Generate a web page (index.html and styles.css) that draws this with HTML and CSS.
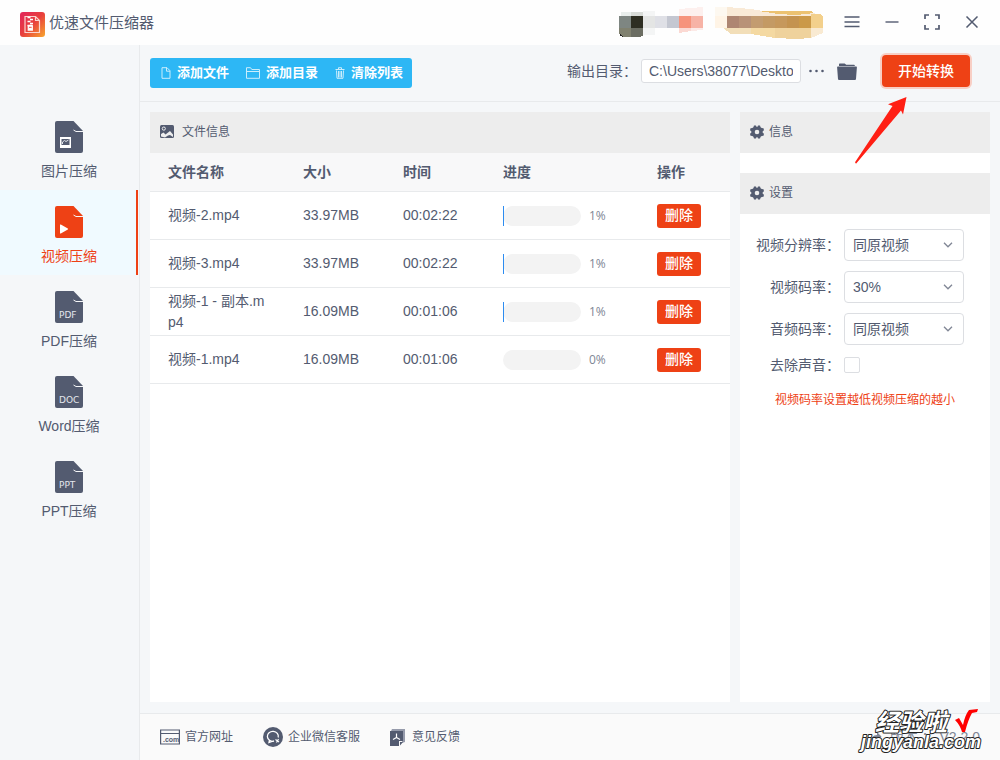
FILE: index.html
```html
<!DOCTYPE html>
<html lang="zh-CN">
<head>
<meta charset="utf-8">
<meta name="viewport" content="width=device-width, initial-scale=1">
<title>优速文件压缩器</title>
<link rel="stylesheet" href="styles.css">
</head>
<body>
<svg class="defs" width="0" height="0" aria-hidden="true">
  <symbol id="file" viewBox="0 0 28 32"><path fill="currentColor" d="M2 0H18.500L28 10V30a2 2 0 0 1-2 2H2a2 2 0 0 1-2-2V2a2 2 0 0 1 2-2z"/><path d="M18.500 9L21 10.500H28" fill="none" stroke="#f6f7f9" stroke-width="1"/></symbol>
  <symbol id="gear" viewBox="0 0 14 14"><path fill="currentColor" fill-rule="evenodd" d="M4 .5h2l.4 1.300h1.200L8 .5h2l.6 1.800 1.100.7 1.800.2.500 2-1.300 1v1.600l1.300 1-.5 2-1.800.2-1.100.7-.6 1.800H8l-.4-1.300H6.400L6 13.500H4l-.6-1.800-1.100-.7-1.800-.2-.5-2 1.300-1V6.200L0 5.200l.5-2L2.300 3l1.100-.7zM7 4.700a2.300 2.300 0 1 0 0 4.600 2.300 2.300 0 0 0 0-4.600z"/></symbol>
  <symbol id="chevron" viewBox="0 0 10 6"><path d="M1 .8l4 4 4-4" fill="none" stroke="currentColor" stroke-width="1.300"/></symbol>
</svg>
<div class="app">
  <header class="titlebar">
    <svg class="logo" width="25" height="25" viewBox="0 0 25 25" aria-hidden="true">
      <defs><linearGradient id="lg" x1="0" y1="0" x2="1" y2="1"><stop offset="0.1" stop-color="#e32a56"/><stop offset="0.5" stop-color="#e8403c"/><stop offset="1" stop-color="#f8a72e"/></linearGradient></defs>
      <rect width="25" height="25" rx="3" fill="url(#lg)"/>
      <path d="M5 4.500h10.500l4 4v12H5zM15.500 4.500v4h4" fill="none" stroke="#fbd5d0" stroke-width="1.200"/>
      <path d="M7.500 5.500h3M10 7.500h3M7.500 9.500h3M10 11.500h3M7.500 13.500h5" stroke="#fff" stroke-width="1.400"/>
      <path d="M8.300 14h4v4h-4zM9 16.500h2.600" fill="none" stroke="#fff" stroke-width="1.300"/>
    </svg>
    <h1 class="title">优速文件压缩器</h1>
    <svg class="mosaic" width="206" height="36" viewBox="0 0 206 36" shape-rendering="crispEdges" aria-hidden="true">
      <path fill="#e9eeec" d="M2 8h10v5H2z"/><path fill="#d8dbd7" d="M12 8h12v5H12z"/><path fill="#f4f5f5" d="M24 7h12v5H24zM24 24h12v7H24z"/>
      <path fill="#7e8682" d="M0 12h12v12H0z"/><path fill="#2e2e22" d="M12 12h12v12H12z"/><path fill="#80816f" d="M0 24h12v9H4L0 30z"/><path fill="#6b6d62" d="M12 24h12v8l-4 1h-8z"/><path fill="#222" d="M1 30l4 3-4-1z"/>
      <path fill="#e4e5e4" d="M24 12h12v12H24z"/><path fill="#dfe0e6" d="M36 12h12v12H36z"/><path fill="#c4c7d1" d="M48 12h12v12H48z"/>
      <path fill="#fdf0ee" d="M60 5l24-2v9H60z"/><path fill="#f6937c" d="M60 12h12v12H60z"/><path fill="#f7b3a6" d="M72 12h12v12H72z"/><path fill="#fbd9d3" d="M60 24h12v3l-12 2z"/><path fill="#fceae7" d="M72 24h12v2l-12 1z"/>
      <path fill="#fdf8f0" d="M96 3l12 0v9H96z"/><path fill="#f9ead7" d="M108 3l24 2 24 4h38l10 3h-96z"/><path fill="#ecc271" d="M140 7h52l3 2-18 2-18-1z"/>
      <path fill="#fff4e6" d="M96 12h12v12H96z"/><path fill="#ae8672" d="M108 12h12v12h-12z"/><path fill="#b89278" d="M120 12h12v12h-12z"/><path fill="#c39c70" d="M132 12h12v12h-12z"/><path fill="#c49a64" d="M144 12h12v12h-12z"/><path fill="#c6985c" d="M156 12h12v12h-12z"/><path fill="#c49350" d="M168 12h12v12h-12z"/><path fill="#cb9948" d="M180 12h12v12h-12z"/><path fill="#f3d08c" d="M192 10l9 0 3 3v11h-12z"/>
      <path fill="#f2deb8" d="M104 24h28v6h-20z"/><path fill="#f4d9a2" d="M132 24h24v10l-24-4z"/><path fill="#efd29c" d="M156 24h36v10l-14 1-22-1z"/><path fill="#f9ead2" d="M192 24h12v5l-12 5z"/>
    </svg>
    <div class="window-tools">
      <button aria-label="菜单"><svg width="16" height="12" viewBox="0 0 16 12"><path d="M.5 1h15M.5 6h15M.5 10.500h15" stroke="currentColor" stroke-width="1.400"/></svg></button>
      <button aria-label="最小化"><svg width="16" height="12" viewBox="0 0 16 12"><path d="M1.500 6h13" stroke="currentColor" stroke-width="1.400"/></svg></button>
      <button aria-label="最大化"><svg width="16" height="16" viewBox="0 0 16 16"><path d="M1 5V1h4M11 1h4v4M15 11v4h-4M5 15H1v-4" fill="none" stroke="currentColor" stroke-width="1.700"/></svg></button>
      <button aria-label="关闭"><svg width="16" height="12" viewBox="0 0 16 12"><path d="M2.500.5l11 11M13.500.5l-11 11" stroke="currentColor" stroke-width="1.500"/></svg></button>
    </div>
  </header>

  <nav class="sidebar">
    <a href="#image" class="nav-item"><svg width="28" height="32" viewBox="0 0 28 32"><use href="#file"/><path fill="#fff" d="M5 16h11v11H5z"/><path fill="#535b70" d="M6.500 18h8v6h-8z"/><path d="M7.500 23v-2l2-1.500 1.500 1 2.500-1.500" fill="none" stroke="#dfe2e8"/></svg>图片压缩</a>
    <a href="#video" class="nav-item active" aria-current="page"><svg width="28" height="32" viewBox="0 0 28 32"><use href="#file"/><path fill="#fff" d="M5 19v8q0 .8.8.4l7-3.900q.6-.5 0-1l-7-3.900q-.8-.4-.8.4z"/></svg>视频压缩</a>
    <a href="#pdf" class="nav-item"><svg width="28" height="32" viewBox="0 0 28 32"><use href="#file"/><text x="4" y="27">PDF</text></svg>PDF压缩</a>
    <a href="#word" class="nav-item"><svg width="28" height="32" viewBox="0 0 28 32"><use href="#file"/><text x="4" y="27">DOC</text></svg>Word压缩</a>
    <a href="#ppt" class="nav-item"><svg width="28" height="32" viewBox="0 0 28 32"><use href="#file"/><text x="4" y="27">PPT</text></svg>PPT压缩</a>
  </nav>

  <div class="toolbar">
    <div class="actions">
      <button><svg width="10" height="12" viewBox="0 0 10 12"><path d="M1 .7h5l3 3v7.600H1zM5.500.7v3.500H9" fill="none" stroke="currentColor"/></svg>添加文件</button>
      <button><svg width="14" height="12" viewBox="0 0 14 12"><path d="M.5 11.300V.7h4l1.300 1.800h7.700v8.800zM.5 4.500h13" fill="none" stroke="currentColor"/></svg>添加目录</button>
      <button><svg width="10" height="12" viewBox="0 0 10 12"><path d="M.5 2.500h9M3.500 2V.7h3V2M1.500 3.500l.5 7.800h6l.5-7.800M3.500 4v6.500M5 4v6.500M6.500 4v6.500" fill="none" stroke="currentColor" stroke-width="1"/></svg>清除列表</button>
    </div>
    <div class="output">
      <label for="out">输出目录：</label>
      <input id="out" type="text" value="C:\Users\38077\Desktop">
      <button class="plain" aria-label="更多"><svg width="15" height="4" viewBox="0 0 15 4"><path fill="currentColor" d="M1.500.7a1.300 1.300 0 1 1 0 2.600 1.300 1.300 0 0 1 0-2.600zM7.500.7a1.300 1.300 0 1 1 0 2.600 1.300 1.300 0 0 1 0-2.600zM13.500.7a1.300 1.300 0 1 1 0 2.600 1.300 1.300 0 0 1 0-2.600z"/></svg></button>
      <button class="plain folder" aria-label="打开目录"><svg width="20" height="17" viewBox="0 0 20 17"><path fill="currentColor" d="M2 3V1.200q0-.7.7-.7h5l1.500 1.300H17q.8 0 .8.700V3z"/><path fill="currentColor" d="M.8 3.400h18.400q.8 0 .7.800l-.9 11.800q-.1.900-1 .9H2q-.9 0-1-.9L.1 4.200q0-.8.7-.8z"/></svg></button>
    </div>
    <div class="start-wrap">
      <button class="start">开始转换</button>
      <svg class="arrow" width="54" height="70" viewBox="0 0 54 70" aria-hidden="true"><path fill="#ff1f14" d="M52.500 1L34 8.300l4.500 1.700L1 66.300l1 1.500L47 14.500l2 4z"/></svg>
    </div>
  </div>

  <main class="content">
    <section class="panel files">
      <h2 class="panel-title"><svg width="14" height="13" viewBox="0 0 14 13"><path fill="currentColor" d="M1.500 0h11q1.500 0 1.500 1.500v10q0 1.500-1.500 1.500h-11Q0 13 0 11.500v-10Q0 0 1.500 0z"/><circle cx="3.800" cy="3.600" r="1.600" fill="none" stroke="#eee"/><path fill="#eee" d="M1 11.500V9l2.500-1.500L5.500 9.500 10 6l3 3.500v2.500l-3-2-2 .5-3 2z"/></svg>文件信息</h2>
      <table>
        <colgroup><col class="c-name"><col class="c-size"><col class="c-time"><col class="c-progress"><col class="c-op"></colgroup>
        <thead><tr><th>文件名称</th><th>大小</th><th>时间</th><th>进度</th><th>操作</th></tr></thead>
        <tbody>
          <tr><td>视频-2.mp4</td><td>33.97MB</td><td>00:02:22</td><td><div class="progress"><div class="track"><div class="bar" style="width:1%"></div></div>1%</div></td><td><button class="del">删除</button></td></tr>
          <tr><td>视频-3.mp4</td><td>33.97MB</td><td>00:02:22</td><td><div class="progress"><div class="track"><div class="bar" style="width:1%"></div></div>1%</div></td><td><button class="del">删除</button></td></tr>
          <tr><td>视频-1 - 副本.mp4</td><td>16.09MB</td><td>00:01:06</td><td><div class="progress"><div class="track"><div class="bar" style="width:1%"></div></div>1%</div></td><td><button class="del">删除</button></td></tr>
          <tr><td>视频-1.mp4</td><td>16.09MB</td><td>00:01:06</td><td><div class="progress"><div class="track"><div class="bar" style="width:0%"></div></div>0%</div></td><td><button class="del">删除</button></td></tr>
        </tbody>
      </table>
    </section>
    <aside class="panel side">
      <h2 class="panel-title"><svg width="14" height="14"><use href="#gear"/></svg>信息</h2>
      <h2 class="panel-title settings-title"><svg width="14" height="14"><use href="#gear"/></svg>设置</h2>
      <form class="settings">
        <label for="res">视频分辨率：</label>
        <div class="select"><select id="res"><option>同原视频</option></select><svg width="10" height="6"><use href="#chevron"/></svg></div>
        <label for="vbr">视频码率：</label>
        <div class="select"><select id="vbr"><option>30%</option></select><svg width="10" height="6"><use href="#chevron"/></svg></div>
        <label for="abr">音频码率：</label>
        <div class="select"><select id="abr"><option>同原视频</option></select><svg width="10" height="6"><use href="#chevron"/></svg></div>
        <label for="mute">去除声音：</label>
        <input id="mute" type="checkbox">
      </form>
      <p class="hint">视频码率设置越低视频压缩的越小</p>
    </aside>
  </main>

  <footer class="footer">
    <a href="#site"><svg width="20" height="16" viewBox="0 0 20 16"><path d="M.6 1h18.800v14H.6zM.6 4.500h18.800" fill="none" stroke="currentColor" stroke-width="1.200"/><text class="com" x="3" y="13">.com</text></svg>官方网址</a>
    <a href="#wechat"><svg width="20" height="20" viewBox="0 0 20 20"><circle cx="10" cy="10" r="10" fill="currentColor"/><path d="M15.200 10.500A5.500 5 0 1 0 11 14.200L9 14.300 6 15.500 6.500 13" fill="none" stroke="#fff" stroke-width="1.300"/><path d="M12.500 12.500l3.500 2.500M15.500 12l-2 3.500" stroke="#fff" stroke-width="1.200"/></svg>企业微信客服</a>
    <a href="#feedback"><svg width="15" height="17" viewBox="0 0 15 17"><path fill="#969bab" d="M2 0h13v13l-3 1V2H1z"/><path fill="currentColor" d="M0 2h13v10H9v5H0z"/><path fill="currentColor" d="M10 13h3l-3 3.500z"/><path d="M6.500 4.500v4M6.500 8.500l-3.500 2M6.500 8.500l3.500 2" fill="none" stroke="#fff" stroke-width="1.200"/></svg>意见反馈</a>
    <div class="version"><svg width="12" height="12" viewBox="0 0 12 12"><path d="M1 11q0-7 6-7V1l4.500 4.500L7 10V7Q3 7 1 11z" fill="currentColor"/></svg>版本 ： V2.2.0
      <svg class="watermark" width="130" height="52" viewBox="0 0 130 52">
        <text class="wm-cn" x="18" y="24">经验啦</text>
        <path d="M98 13l4-2 4 7q2-10 6-15l9-1-1 3-5 1q-4 7-7 19h-3q-2-7-7-12z" fill="#f00"/>
        <text class="wm-en" x="4" y="41">jingyanla.com</text>
      </svg>
    </div>
  </footer>
</div>
</body>
</html>
```

FILE: styles.css
```css
* { box-sizing: border-box; }

body {
  margin: 0;
  color: #535b70;
  font: 14px/20px "Liberation Sans", "Noto Sans CJK SC", sans-serif;
}

button, input, select { font: inherit; color: inherit; }
button { padding: 0; border: 0; background: none; cursor: pointer; }
a { color: inherit; text-decoration: none; }
svg { flex: none; }
.defs { position: absolute; }

.app {
  display: grid;
  grid-template: 45px 57px minmax(0, 1fr) 47px / 140px minmax(0, 1fr);
  min-height: 100vh;
  background: #f5f7f9;
}

.titlebar {
  grid-column: 1 / -1;
  display: flex;
  align-items: center;
  padding: 0 20px;
  background: #fefefe;
}
.logo { margin-top: 4px; }
.title { margin: 0 auto 0 4px; font-size: 15px; font-weight: 400; }
.mosaic { margin: 0 19px 2px 0; }
.window-tools { display: flex; align-items: center; gap: 24px; padding-bottom: 2px; }
.window-tools button { display: flex; }

.sidebar {
  grid-row: 2 / -1;
  padding-top: 60px;
  border-right: 1px solid #e8eaec;
}
.nav-item {
  display: flex;
  flex-direction: column;
  align-items: center;
  gap: 8px;
  height: 85px;
  margin-right: 1px;
  padding-top: 16px;
}
.nav-item.active {
  color: #ee4115;
  background: #f0faff;
  box-shadow: inset -2px 0 #ee4115;
}
.nav-item text { fill: #e4e7ed; font: 9px "DejaVu Sans", sans-serif; }

.toolbar {
  display: flex;
  align-items: center;
  padding: 0 30px 4px 10px;
  border-bottom: 1px solid #e8eaec;
}
.actions {
  display: flex;
  gap: 17px;
  height: 30px;
  margin: 4px auto 0 0;
  padding: 0 9px 0 11px;
  border-radius: 3px;
  color: #fff;
  background: #2db7f5;
  font-size: 13px;
  font-weight: 700;
}
.actions button { display: flex; align-items: center; gap: 6px; }
.actions svg { opacity: 0.75; }
.output { display: flex; align-items: center; }
.output input {
  width: 160px;
  height: 24px;
  margin: 0 8px 0 4px;
  padding: 0 7px;
  border: 1px solid #dcdee2;
  border-radius: 3px;
  background: #fff;
}
.plain { display: flex; }
.folder { margin-left: 13px; }
.start-wrap { position: relative; margin-left: 25px; }
.start {
  width: 88px;
  height: 32px;
  border-radius: 4px;
  color: #fff;
  background: #ee4115;
  box-shadow: 0 0 0 2px #f8cfc5;
  font-weight: 500;
}
.arrow { position: absolute; top: 41px; right: 62px; }

.content {
  display: grid;
  grid-template-columns: minmax(0, 1fr) 250px;
  gap: 10px;
  padding: 10px 10px 11px;
}
.panel { background: #fff; }
.panel-title {
  display: flex;
  align-items: center;
  gap: 8px;
  height: 41px;
  margin: 0;
  padding: 0 10px 2px;
  background: #ededed;
  font-size: 12px;
  font-weight: 400;
}
.side .panel-title { gap: 5px; }
.settings-title { margin-top: 20px; }

table { width: 100%; table-layout: fixed; border-collapse: separate; border-spacing: 0; }
.c-name { width: 135px; }
.c-size, .c-time { width: 100px; }
.c-op { width: 91px; }
th, td {
  height: 48px;
  padding: 0 18px;
  border-bottom: 1px solid #e8eaec;
  text-align: left;
  line-height: 21px;
  word-break: break-all;
}
th { height: 39px; background: #f8f8f9; font-weight: 700; }
.progress { display: flex; align-items: center; gap: 8px; color: #808695; font: 12px/20px "Open Sans", sans-serif; }
.track { width: 78px; height: 20px; border-radius: 10px; background: #f3f3f3; }
.bar { min-width: 0; height: 20px; background: #2d8cf0; }
.del {
  display: block;
  width: 44px;
  height: 24px;
  border-radius: 3px;
  color: #fff;
  background: #ee4115;
  font-weight: 500;
}

.settings {
  display: grid;
  grid-template-columns: 100px 120px;
  align-items: center;
  gap: 10px 4px;
  padding-top: 15px;
}
.settings label { text-align: right; }
.select { display: grid; align-items: center; }
.select > * { grid-area: 1 / 1; }
.select select {
  appearance: none;
  width: 100%;
  height: 32px;
  padding: 0 24px 0 8px;
  border: 1px solid #dcdee2;
  border-radius: 4px;
  background: #fff;
}
.select svg { justify-self: end; margin-right: 11px; color: #808695; pointer-events: none; }
.settings input {
  appearance: none;
  width: 16px;
  height: 16px;
  margin: 0;
  border: 1px solid #dcdee2;
  border-radius: 2px;
  background: #fff;
}
.hint { margin: 15px 0 0; color: #ee4115; font-size: 12px; text-align: center; }

.footer {
  display: flex;
  align-items: center;
  gap: 30px;
  padding: 0 20px;
  border-top: 1px solid #e8eaec;
  background: #fafafa;
  font-size: 12px;
}
.footer a { display: flex; align-items: center; gap: 5px; }
.footer a:nth-child(3) { gap: 7px; }
.com { fill: currentColor; font: 700 7px "Liberation Sans", sans-serif; }
.version {
  position: relative;
  display: flex;
  align-items: center;
  gap: 8px;
  margin-left: auto;
  color: #808695;
  font-size: 14px;
}
.watermark { position: absolute; right: -7px; bottom: -12px; overflow: visible; }
.watermark text { fill: #fff; stroke: #222; stroke-width: 2px; stroke-linejoin: round; paint-order: stroke; font-style: italic; font-weight: 700; }
.watermark .wm-cn { font-size: 24px; font-family: "Noto Sans CJK SC", sans-serif; }
.watermark .wm-en { font-size: 18px; font-family: "Liberation Sans", sans-serif; }
```
